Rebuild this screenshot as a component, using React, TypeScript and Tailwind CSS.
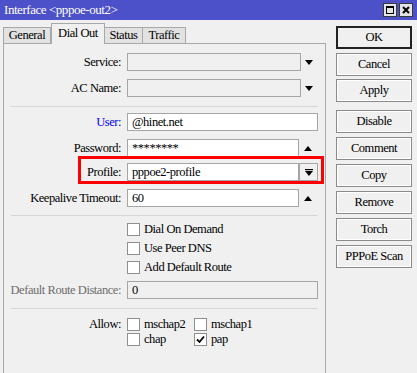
import React from "react";

const serif = "font-['Liberation_Serif',serif] text-[12.5px] tracking-[-0.45px] text-black";

function DownArrow() {
  return (
    <svg width="8" height="5" viewBox="0 0 8 5">
      <polygon points="0,0 8,0 4,5" fill="#000" />
    </svg>
  );
}

function UpArrow() {
  return (
    <svg width="8" height="5" viewBox="0 0 8 5">
      <polygon points="0,5 8,5 4,0" fill="#000" />
    </svg>
  );
}

function Label({ children, className = "" }: { children: React.ReactNode; className?: string }) {
  return <div className={`w-[117px] shrink-0 text-right leading-[18px] ${className}`}>{children}</div>;
}

function Box({ value = "", width, white = true }: { value?: string; width: string; white?: boolean }) {
  return (
    <div
      className={`ml-[6px] h-[18px] ${width} border border-[#a5a5a5] px-[4px] leading-[16px] ${
        white ? "bg-white" : "bg-[#f0f0f0]"
      }`}
    >
      {value}
    </div>
  );
}

function Check({ checked = false }: { checked?: boolean }) {
  return (
    <div className="flex h-[13px] w-[13px] shrink-0 items-center justify-center border border-[#8f8f8f] bg-white">
      {checked && (
        <svg width="9" height="9" viewBox="0 0 9 9">
          <path d="M1 4.5 L3.5 7 L8 1.5" stroke="#000" strokeWidth="1.8" fill="none" />
        </svg>
      )}
    </div>
  );
}

function Sep({ className = "" }: { className?: string }) {
  return <div className={`ml-[7px] h-px w-[307px] bg-[#d6d6d6] ${className}`} />;
}

function Btn({ children, primary = false, className = "" }: { children: React.ReactNode; primary?: boolean; className?: string }) {
  return (
    <div
      className={`flex h-[23px] w-[76px] items-center justify-center bg-[#f0f0f0] ${
        primary ? "border-2 border-[#222]" : "border border-[#8a8a8a] shadow-[inset_0_0_0_1px_#ffffff]"
      } ${className}`}
    >
      {children}
    </div>
  );
}

export default function App() {
  return (
    <div className={`h-[373px] w-[417px] overflow-hidden bg-[#f0f0f0] ${serif}`}>
      {/* title bar */}
      <div className="flex h-[20px] items-center bg-[#4c50c9] pl-[4px] pr-[4px] text-white">
        <span className="text-[13px] text-white">Interface &lt;pppoe-out2&gt;</span>
        <div className="ml-auto flex gap-[2px]">
          <div className="flex h-[14px] w-[14px] items-center justify-center border border-[#3a3a3a] bg-[#e4e4e4]">
            <div className="h-[8px] w-[8px] border border-t-2 border-black" />
          </div>
          <div className="flex h-[14px] w-[14px] items-center justify-center border border-[#3a3a3a] bg-[#e4e4e4]">
            <svg width="8" height="8" viewBox="0 0 8 8">
              <path d="M1 1 L7 7 M7 1 L1 7" stroke="#000" strokeWidth="2" />
            </svg>
          </div>
        </div>
      </div>

      <div className="flex h-[353px]">
        {/* left: tabs + panel */}
        <div className="ml-[3px] flex w-[323px] flex-col">
          <div className="flex h-[23px] items-end">
            <div className="h-[16px] w-[48px] border border-b-0 border-[#a8a8a8] bg-[#e2e2e2] text-center leading-[15px]">General</div>
            <div className="relative z-10 -mb-px h-[21px] w-[54px] border border-b-0 border-[#a8a8a8] bg-[#f0f0f0] text-center leading-[18px]">Dial Out</div>
            <div className="h-[16px] w-[38px] border border-b-0 border-l-0 border-[#a8a8a8] bg-[#e2e2e2] text-center leading-[15px]">Status</div>
            <div className="h-[16px] w-[43px] border border-b-0 border-l-0 border-[#a8a8a8] bg-[#e2e2e2] text-center leading-[15px]">Traffic</div>
          </div>
          <div className="flex-1 border border-b-0 border-[#a8a8a8] bg-[#f0f0f0]">
            <div className="mt-[9px] flex h-[18px] items-center">
              <Label>Service:</Label>
              <Box width="w-[174px]" white={false} />
              <div className="ml-[4px]"><DownArrow /></div>
            </div>
            <div className="mt-[8px] flex h-[18px] items-center">
              <Label>AC Name:</Label>
              <Box width="w-[174px]" white={false} />
              <div className="ml-[4px]"><DownArrow /></div>
            </div>
            <Sep className="mt-[9px]" />
            <div className="mt-[6px] flex h-[18px] items-center">
              <Label className="text-[#0000ff]">User:</Label>
              <Box width="w-[191px]" value="@hinet.net" />
            </div>
            <div className="mt-[8px] flex h-[18px] items-center">
              <Label>Password:</Label>
              <Box width="w-[172px]" value="********" />
              <div className="ml-[5px]"><UpArrow /></div>
            </div>
            <div className="relative mt-[6px] flex h-[18px] items-center">
              <Label>Profile:</Label>
              <Box width="w-[172px]" value="pppoe2-profile" />
              <div className="flex h-[18px] w-[19px] items-center justify-center border border-[#a5a5a5] bg-[#f0f0f0]">
                <svg width="8" height="7" viewBox="0 0 8 7">
                  <rect x="0" y="0" width="8" height="1.2" fill="#000" />
                  <polygon points="0,2 8,2 4,7" fill="#000" />
                </svg>
              </div>
              <div className="absolute left-[74px] top-[-7px] h-[28px] w-[246px] border-[3px] border-[#ff0000]" />
            </div>
            <div className="mt-[8px] flex h-[18px] items-center">
              <Label>Keepalive Timeout:</Label>
              <Box width="w-[172px]" value="60" />
              <div className="ml-[5px]"><UpArrow /></div>
            </div>
            <Sep className="mt-[8px]" />
            <div className="ml-[123px] mt-[7px] flex flex-col gap-[6px]">
              {["Dial On Demand", "Use Peer DNS", "Add Default Route"].map((t) => (
                <div key={t} className="flex h-[13px] items-center gap-[4px] leading-[13px]">
                  <Check />
                  <span>{t}</span>
                </div>
              ))}
            </div>
            <div className="mt-[7px] flex h-[18px] items-center">
              <Label className="text-[#6d6d6d]">Default Route Distance:</Label>
              <Box width="w-[191px]" value="0" white={false} />
            </div>
            <Sep className="mt-[9px]" />
            <div className="mt-[9px] flex">
              <div className="w-[117px] text-right leading-[13px]">Allow:</div>
              <div className="ml-[6px] grid grid-cols-[67px_auto] gap-y-[2px]">
                {[
                  ["mschap2", false],
                  ["mschap1", false],
                  ["chap", false],
                  ["pap", true],
                ].map(([t, c]) => (
                  <div key={t as string} className="flex h-[13px] items-center gap-[4px] leading-[13px]">
                    <Check checked={c as boolean} />
                    <span>{t as string}</span>
                  </div>
                ))}
              </div>
            </div>
          </div>
        </div>

        {/* right: buttons */}
        <div className="ml-[10px] flex flex-col pt-[6px]">
          <Btn primary>OK</Btn>
          <Btn className="mt-[4px] h-[22px]">Cancel</Btn>
          <Btn className="mt-[3px] h-[22px]">Apply</Btn>
          <Btn className="mt-[8px] h-[22px]">Disable</Btn>
          <Btn className="mt-[4px] h-[22px]">Comment</Btn>
          <Btn className="mt-[4px] h-[22px]">Copy</Btn>
          <Btn className="mt-[4px] h-[22px]">Remove</Btn>
          <Btn className="mt-[4px] h-[22px]">Torch</Btn>
          <Btn className="mt-[4px] h-[22px]">PPPoE Scan</Btn>
        </div>
      </div>
    </div>
  );
}
